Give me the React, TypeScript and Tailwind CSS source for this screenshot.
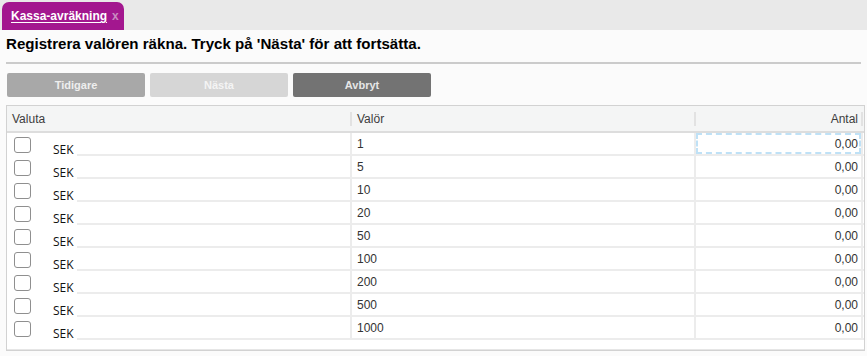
import React from 'react';

const values = ['1', '5', '10', '20', '50', '100', '200', '500', '1000'];

function Checkbox() {
  return <div className="h-[16px] w-[17px] rounded-[3px] border border-[#8f8f8f] bg-white" />;
}

export default function App() {
  return (
    <div className="h-[356px] w-[867px] overflow-hidden bg-[#fbfbfb] font-['Liberation_Sans',Arial,sans-serif] text-[#222]">
      {/* Tab bar */}
      <div className="flex h-[30px] items-end bg-[#e9e9e9] pl-[2px]">
        <div className="flex h-[28px] w-[122px] items-center rounded-t-[7px] bg-[#a3178f] pl-[9px]">
          <span className="text-[12px] font-bold text-white underline underline-offset-2">Kassa-avräkning</span>
          <span className="ml-[5px] text-[12px] font-bold text-[#c98bc0]">x</span>
        </div>
      </div>

      <div className="px-[6px]">
        {/* Heading */}
        <div className="flex h-[34px] items-end border-b-2 border-[#cbcbcb] pb-[6px]">
          <h1 className="text-[15.1px] font-bold text-black">
            Registrera valören räkna. Tryck på 'Nästa' för att fortsätta.
          </h1>
        </div>

        {/* Buttons */}
        <div className="mt-[9px] flex gap-[5px] pl-[1px]">
          <button className="h-[24px] w-[138px] rounded-[2px] bg-[#a8a8a8] text-[11px] font-bold text-[#eeeeee]">Tidigare</button>
          <button className="h-[24px] w-[138px] rounded-[2px] bg-[#d6d6d6] text-[11px] font-bold text-[#f4f4f4]">Nästa</button>
          <button className="h-[24px] w-[138px] rounded-[2px] bg-[#737373] text-[11px] font-bold text-[#e6e6e6]">Avbryt</button>
        </div>

        {/* Table */}
        <div className="mt-[8px] w-[859px] border border-[#d2d2d2] bg-white">
          <div className="flex h-[27px] border-b-2 border-[#dddddd] bg-[#f4f5f5] text-[12px] text-[#3c3c3c]">
            <div className="flex w-[343px] items-center pl-[5px]">Valuta</div>
            <div className="flex w-[344px] items-center">
              <div className="h-[14px] w-[2px] bg-[#e2e2e2]" />
              <span className="pl-[5px]">Valör</span>
            </div>
            <div className="flex flex-1 items-center">
              <div className="h-[14px] w-[2px] bg-[#e2e2e2]" />
              <span className="flex-1 pr-[3px] text-right">Antal</span>
              <div className="mr-[1px] h-[14px] w-[2px] bg-[#e2e2e2]" />
            </div>
          </div>

          {values.map((v, i) => (
            <div key={v} className="flex h-[23px] text-[12px]">
              <div className="flex w-[343px]">
                <div className="flex w-[70px] items-start pl-[7px] pt-[4px]">
                  <Checkbox />
                  <span className="ml-[22px] mt-[5px] font-['Open_Sans',sans-serif] text-[12px] leading-[16px] text-[#111]">SEK</span>
                </div>
                <div className="flex-1 border-b-2 border-[#ececec]" />
              </div>
              <div className="flex w-[344px] items-center border-b-2 border-l-2 border-[#ececec] pl-[5px] text-[#333]">
                {v}
              </div>
              <div className="flex flex-1 border-b-2 border-[#ececec]">
                <div className="w-[2px] bg-[#ececec]" />
                <div
                  className={
                    'flex flex-1 items-center justify-end pr-[1px] text-[#333] ' +
                    (i === 0 ? 'border-2 border-dashed border-[#bfe1f6]' : 'border-2 border-transparent')
                  }
                >
                  0,00
                </div>
                <div className="mr-[1px] w-[2px] bg-[#ececec]" />
              </div>
            </div>
          ))}
          <div className="h-[10px] border-b border-[#e6e6e6]" />
        </div>
      </div>
    </div>
  );
}
